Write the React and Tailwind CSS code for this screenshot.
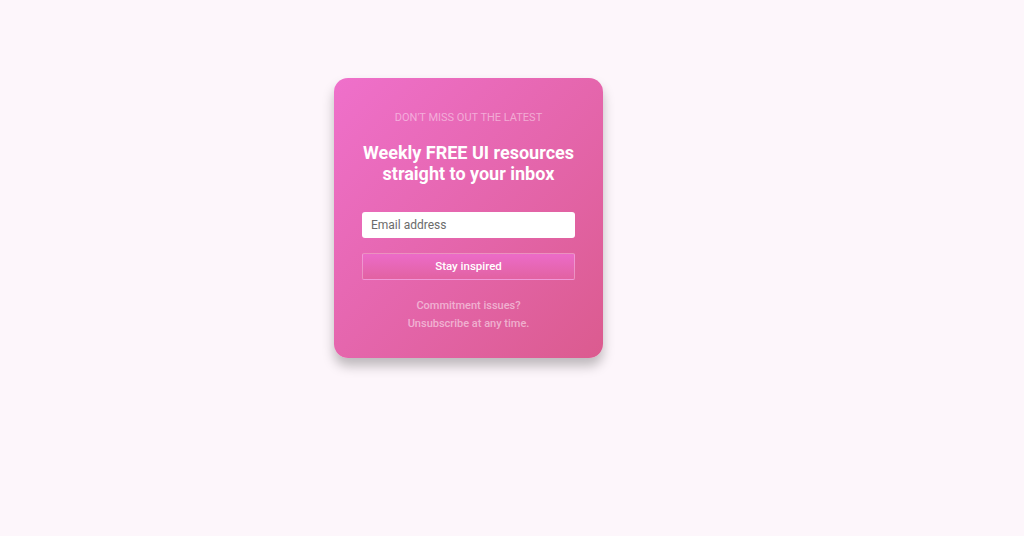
import React from "react";

const App = () => {
  return (
    <div
      className="min-h-screen w-full bg-[#fdf6fb] flex"
      style={{ fontFamily: "Roboto, 'Liberation Sans', sans-serif" }}
    >
      <div className="mt-[78px] ml-[334px] w-[269px] h-[280px] rounded-[14px] bg-gradient-to-br from-[#ef70cb] to-[#db5b8f] shadow-[0_8px_12px_rgba(0,0,0,0.25)] px-7 pt-[33px] flex flex-col items-center">
        <p className="text-[11px] leading-[14px] uppercase text-white/45">
          Don't miss out the latest
        </p>

        <h2 className="mt-[17px] text-[18px] leading-[21px] font-bold text-white text-center">
          Weekly FREE UI resources
          <br />
          straight to your inbox
        </h2>

        <input
          type="text"
          placeholder="Email address"
          className="mt-[28px] w-full h-[26px] rounded-[3px] bg-white px-[9px] text-[12px] text-gray-700 placeholder:text-[#6b6b6b] outline-none"
        />

        <button className="mt-[15px] w-full h-[27px] rounded-[2px] border border-white/30 bg-gradient-to-b from-[#ec6bc8] to-[#e262a2] text-[11.5px] font-medium text-white">
          Stay inspired
        </button>

        <div className="mt-[17px] text-center text-[11px] leading-[18px] font-medium text-white/50">
          <p>Commitment issues?</p>
          <p>Unsubscribe at any time.</p>
        </div>
      </div>
    </div>
  );
};

export default App;
